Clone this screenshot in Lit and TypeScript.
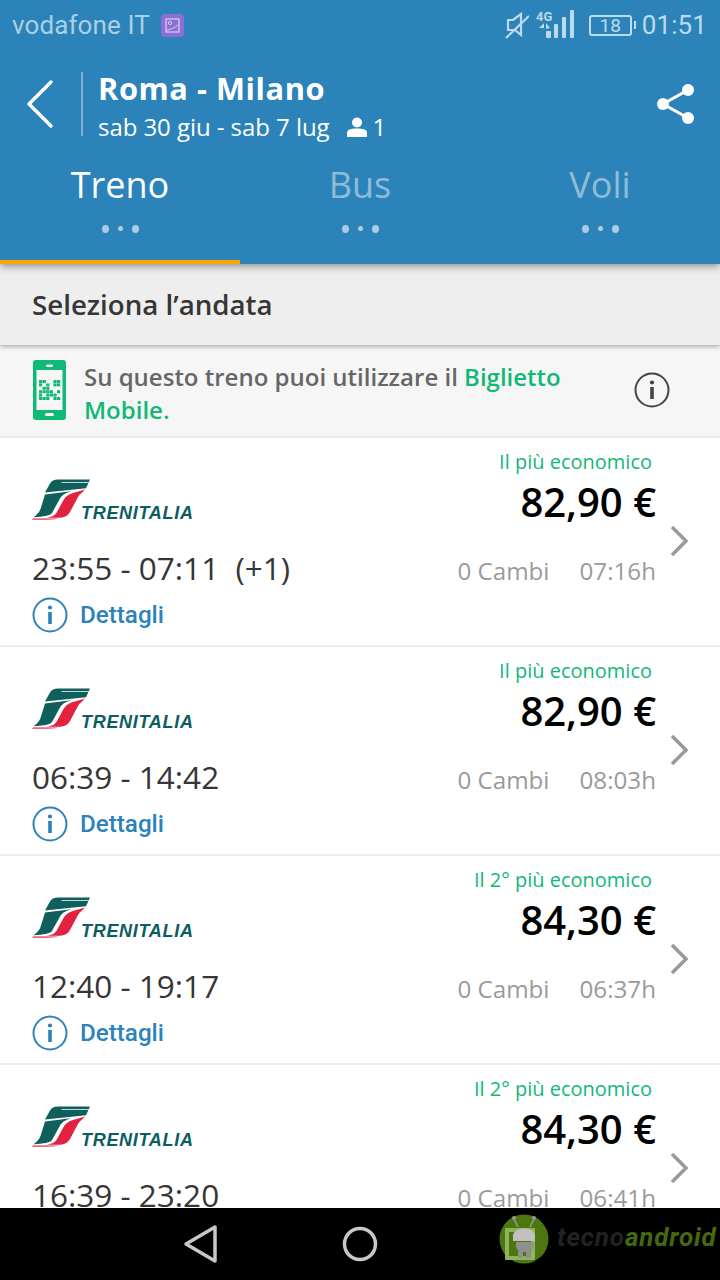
import { LitElement, html, css, svg } from "lit";
import { customElement } from "lit/decorators.js";

const logo = html`<svg class="logo-mark" width="60" height="42" viewBox="0 0 60 42">
  <path fill="#0f5f5c" d="M13 13.500 L18 4.500 C19.500 1.800 22 .5 26 .5 H58 L54 9.200 Z"/>
  <path fill="#fff" d="M30 3 H57 L56.500 3.800 H29 Z"/>
  <path fill="#0f5f5c" d="M13 15.500 L39 12.300 C34 14 30.500 15.500 28 19.500 L20 34 C18 36.500 12 37.800 1.500 38.200 C5 36 7 33.500 8.500 30 Z"/>
  <path fill="#e2233f" d="M53 10.500 C50 14 47.500 15 46 18 L38 33 C35.500 37.500 32 38.500 26 38.800 L14 38.800 C20 38 23 36.500 25 33 L31 22 C33 18 36 15.500 41 14 Z"/>
  <path fill="#ea6a80" d="M1 39.300 H26 C24 40.500 20 41 14 41 H0 Z"/>
</svg>`;

const infoIcon = () => html`<svg viewBox="0 0 36 36" width="36" height="36">
  <circle cx="18" cy="18" r="16.500" fill="none" stroke="currentColor" stroke-width="2"/>
  <circle cx="18" cy="10.500" r="2.100" fill="currentColor"/>
  <rect x="16.200" y="15" width="3.600" height="12" fill="currentColor"/>
</svg>`;

const rows = [
  { tag: "Il più economico", price: "82,90 €", time: "23:55 - 07:11", extra: "(+1)", dur: "07:16h", cambi: "0 Cambi" },
  { tag: "Il più economico", price: "82,90 €", time: "06:39 - 14:42", extra: "", dur: "08:03h", cambi: "0 Cambi" },
  { tag: "Il 2° più economico", price: "84,30 €", time: "12:40 - 19:17", extra: "", dur: "06:37h", cambi: "0 Cambi" },
  { tag: "Il 2° più economico", price: "84,30 €", time: "16:39 - 23:20", extra: "", dur: "06:41h", cambi: "0 Cambi" },
];

const qrCells = [
  [0,0],[1,0],[4,0],[5,0],[0,1],[2,1],[4,1],[5,1],[1,2],[2,2],[0,3],[1,3],[2,3],[3,3],[5,3],[0,4],[2,4],[3,4],[4,4],[0,5],[1,5],[2,5],[4,5],[5,5],
];

@customElement("app-root")
export class AppRoot extends LitElement {
  static styles = css`
    :host {
      display: flex;
      flex-direction: column;
      width: 720px;
      height: 1280px;
      overflow: hidden;
      background: #fff;
      font-family: "Open Sans", sans-serif;
      position: relative;
    }
    .top {
      background: #2b83b9;
      height: 264px;
      flex: none;
      display: flex;
      flex-direction: column;
      position: relative;
      z-index: 2;
      box-shadow: 0 3px 7px rgba(0,0,0,.35);
    }
    .status {
      height: 50px;
      flex: none;
      display: flex;
      align-items: center;
      padding: 0 13px 0 12px;
      color: #a9d0e5;
    }
    .carrier { font-family: "Roboto", sans-serif; font-size: 26px; letter-spacing: .1px; }
    .thumb { margin-left: 11px; }
    .spacer { flex: 1; }
    .status-icons { display: flex; align-items: center; }
    .signal { margin-left: 7px; }
    .batt {
      width: 43px; height: 21px; margin-left: 11px; box-sizing: border-box;
      border: 2px solid #bcdbec; border-radius: 3px;
      font: 19px/17px "Roboto", sans-serif; text-align: center; color: #bcdbec;
      position: relative;
    }
    .batt::after {
      content: ""; position: absolute; right: -6px; top: 4px; width: 2px; height: 8px; background: #bcdbec;
    }
    .clock { font: 26px "Roboto", sans-serif; margin-left: 10px; color: #bcdbec; letter-spacing: .1px; }
    .head {
      display: flex;
      align-items: center;
      height: 66px;
      flex: none;
      padding-left: 26px;
      padding-right: 24px;
      color: #fff;
      margin-top: 21px;
    }
    .divider { width: 2px; height: 64px; background: #80b4d4; margin-left: 27px; margin-right: 15px; }
    .titles { display: flex; flex-direction: column; margin-top: 3px; }
    .title { font-size: 30.800px; font-weight: 700; line-height: 36px; letter-spacing: .55px; }
    .sub { font-size: 24px; line-height: 30px; display: flex; align-items: center; letter-spacing: -.06px; margin-top: 6px; }
    .sub svg { margin-left: 17px; margin-right: 6px; }
    .tabs { display: flex; flex: 1; margin-top: 23px; }
    .tab {
      flex: 1;
      position: relative;
      display: flex; flex-direction: column; align-items: center;
      color: #8ebcd8;
      font-size: 36px;
      line-height: 46px;
      padding-top: 2px;
    }
    .tab.on { color: #fff; }
    .tab.on::after {
      content: ""; position: absolute; left: 0; right: 0; bottom: 0; height: 4px; background: #f6a800;
    }
    .dots { display: flex; align-items: center; gap: 9px; margin-top: 16.500px; }
    .dots i { display: block; width: 7px; height: 8px; border-radius: 50%; background: #a9cee3; }
    .dots i.s { width: 5px; height: 5px; }
    .section {
      height: 81px; flex: none; background: #eee;
      display: flex; align-items: center; padding: 0 0 2px 32px;
      font-size: 27.700px; font-weight: 600; color: #363636;
      box-shadow: 0 2px 4px rgba(0,0,0,.28);
      position: relative; z-index: 1;
      box-sizing: border-box;
    }
    .banner {
      height: 93px; flex: none; background: #f6f6f6;
      display: flex; align-items: center;
      padding-left: 33px; padding-right: 50px;
      border-bottom: 2px solid #ececec;
      box-sizing: border-box;
    }
    .phone { flex: none; margin-bottom: 2px; }
    .banner-text {
      flex: 1; margin-left: 18px;
      font-size: 24px; line-height: 33px; font-weight: 600; color: #666;
      padding-top: 5px;
    }
    .banner-text b { color: #10b975; font-weight: 600; }
    .banner-info { color: #444; flex: none; margin-top: 4px; }
    .list { flex: 1; overflow: hidden; min-height: 0; }
    .row {
      height: 209px;
      box-sizing: border-box;
      border-bottom: 2px solid #eee;
      display: grid;
      grid-template-columns: 1fr auto;
      padding: 0 64px 0 32px;
      position: relative;
      grid-template-rows: 40px 71px auto auto;
    }
    .tag {
      grid-column: 1 / 3; grid-row: 1;
      text-align: right; color: #10b975; font-size: 20px; line-height: 48px;
      padding-right: 4px;
    }
    .logo { grid-column: 1; grid-row: 1 / 3; align-self: start; margin-top: 41px; position: relative; height: 42px; width: 162px; }
    .logo-text {
      position: absolute; left: 49px; top: 25px;
      font: italic 700 18px/18px "Liberation Sans", sans-serif;
      color: #0b5d62; letter-spacing: .7px;
    }
    .price {
      grid-column: 2; grid-row: 2;
      text-align: right; font-size: 40px; font-weight: 600; color: #000; line-height: 50px;
      margin-top: -1px;
    }
    .time {
      grid-column: 1; grid-row: 3;
      font-size: 31.500px; color: #363636; line-height: 44px; white-space: pre; font-weight: 400;
      margin-top: -3px;
    }
    .meta {
      grid-column: 2; grid-row: 3;
      display: flex; gap: 30px; justify-content: flex-end;
      font-size: 24.200px; color: #9a9a9a; line-height: 44px;
    }
    .det {
      grid-column: 1 / 3; grid-row: 4;
      display: flex; align-items: center; gap: 12px;
      color: #2b83b9;
      font: 500 24.200px "Roboto", sans-serif;
      height: 36px;
      margin-top: -9px;
    }
    .chev { position: absolute; right: 32px; top: 87px; }
    .nav {
      height: 72px; flex: none; background: #000;
      display: flex; align-items: center; position: relative; z-index: 3;
    }
    .nav-back { margin-left: 183px; }
    .nav-home { margin-left: 123px; }
    .wm {
      position: absolute; left: 499px; top: 6px; display: flex; align-items: center;
    }
    .wm-text { font: italic 700 26px "Roboto", sans-serif; margin-left: 8px; letter-spacing: .85px; margin-top: -4px; }
    .wm-a { color: #222; }
    .wm-b { color: #46680f; }
  `;

  render() {
    return html`
      <div class="top">
        <div class="status">
          <span class="carrier">vodafone IT</span>
          <svg class="thumb" width="23" height="23" viewBox="0 0 23 23">
            <rect width="23" height="23" rx="4" fill="#8b6fd6"/>
            <rect x="5" y="5" width="13" height="13" fill="none" stroke="#d9d2f2" stroke-width="1.200"/>
            <circle cx="9" cy="9" r="1.600" fill="none" stroke="#d9d2f2" stroke-width="1"/>
            <path d="M5 16 C9 16 14 14 18 10" fill="none" stroke="#d9d2f2" stroke-width="1"/>
          </svg>
          <span class="spacer"></span>
          <div class="status-icons">
            <svg width="24" height="28" viewBox="0 0 24 28">
              <path d="M3 9 H8 L16 3 V24 L10 19 H3 Z" fill="none" stroke="#bcdbec" stroke-width="2.200"/>
              <path d="M1 27 L24 5" stroke="#bcdbec" stroke-width="2.200"/>
            </svg>
            <svg class="signal" width="42" height="30" viewBox="0 0 42 30">
              <text x="0" y="11" font-family="Roboto" font-weight="700" font-size="13" fill="#bcdbec">4G</text>
              <path d="M8 13 L3 18 H8 Z M10 13 V19 L14 18 Z" fill="#bcdbec"/>
              <rect x="10" y="21" width="5" height="7" rx="1" fill="#bcdbec"/>
              <rect x="18" y="14" width="4" height="14" rx="1" fill="#bcdbec"/>
              <rect x="26" y="7" width="4" height="21" rx="1" fill="#bcdbec"/>
              <rect x="34" y="0" width="4" height="28" rx="1" fill="#bcdbec"/>
            </svg>
            <div class="batt">18</div>
          </div>
          <span class="clock">01:51</span>
        </div>
        <div class="head">
          <svg width="28" height="50" viewBox="0 0 28 50">
            <path d="M25 3 L3 25 L25 47" fill="none" stroke="#fff" stroke-width="3.500" stroke-linecap="round" stroke-linejoin="round"/>
          </svg>
          <div class="divider"></div>
          <div class="titles">
            <div class="title">Roma - Milano</div>
            <div class="sub">sab 30 giu - sab 7 lug
              <svg width="20" height="20" viewBox="0 0 20 20"><circle cx="10" cy="5.500" r="5" fill="#fff"/><path d="M0 20 V16 C0 12.500 4 11.500 10 11.500 C16 11.500 20 12.500 20 16 V20 Z" fill="#fff"/></svg>
              1</div>
          </div>
          <span class="spacer"></span>
          <svg width="40" height="42" viewBox="0 0 40 42">
            <path d="M32 7 L7 21 L32 35" fill="none" stroke="#fff" stroke-width="3"/>
            <circle cx="32" cy="7" r="6" fill="#fff"/><circle cx="7" cy="21" r="6" fill="#fff"/><circle cx="32" cy="35" r="6" fill="#fff"/>
          </svg>
        </div>
        <div class="tabs">
          ${["Treno", "Bus", "Voli"].map((t, i) => html`
            <div class="tab ${i === 0 ? "on" : ""}">
              <span>${t}</span>
              <div class="dots"><i></i><i class="s"></i><i></i></div>
            </div>`)}
        </div>
      </div>
      <div class="section">Seleziona l’andata</div>
      <div class="banner">
        <svg class="phone" width="33" height="60" viewBox="0 0 33 60">
          <rect width="33" height="60" rx="3" fill="#10b975"/>
          <rect x="3.500" y="10" width="26" height="40" fill="#f6f6f6"/>
          <rect x="13" y="4.500" width="7" height="2.500" rx="1.200" fill="#f6f6f6"/>
          <rect x="12" y="53" width="9" height="3" rx="1.500" fill="#f6f6f6"/>
          ${qrCells.map(([x, y]) => svg`<rect x=${6 + x * 3.6} y=${20 + y * 3.4} width="3.200" height="3" fill="#10b975"/>`)}
        </svg>
        <div class="banner-text">Su questo treno puoi utilizzare il <b>Biglietto Mobile.</b></div>
        <span class="banner-info">${infoIcon()}</span>
      </div>
      <div class="list">
        ${rows.map((r) => html`
          <div class="row">
            <div class="logo">${logo}<span class="logo-text">TRENITALIA</span></div>
            <div class="tag">${r.tag}</div>
            <div class="price">${r.price}</div>
            <div class="time">${r.time}${r.extra ? html`  ${r.extra}` : ""}</div>
            <div class="meta"><span>${r.cambi}</span><span>${r.dur}</span></div>
            <div class="det">${infoIcon()}<span>Dettagli</span></div>
            <svg class="chev" width="18" height="32" viewBox="0 0 18 32"><path d="M2 2 L16 16 L2 30" fill="none" stroke="#999" stroke-width="3.500"/></svg>
          </div>`)}
      </div>
      <div class="nav">
        <svg class="nav-back" width="36" height="40" viewBox="0 0 36 40"><path d="M32 3 V37 L3 20 Z" fill="none" stroke="#c8c8c8" stroke-width="3.500" stroke-linejoin="round"/></svg>
        <svg class="nav-home" width="36" height="36" viewBox="0 0 36 36"><circle cx="18" cy="18" r="15.500" fill="none" stroke="#c8c8c8" stroke-width="3.500"/></svg>
        <div class="wm">
          <svg width="50" height="50" viewBox="0 0 50 50">
            <circle cx="25" cy="25" r="24.500" fill="#4d7611"/>
            <path d="M15 5 L19 13 M35 5 L31 13" stroke="#9a9a9a" stroke-width="1.500"/>
            <circle cx="15" cy="4" r="2" fill="#9a9a9a"/><circle cx="35" cy="4" r="2" fill="#9a9a9a"/>
            <rect x="6" y="14" width="30" height="32" rx="1" fill="#8fb35a"/>
            <rect x="10" y="18" width="22" height="24" fill="#4d7611"/>
            <path d="M14 22 C14 12 36 12 36 22 V27 H14 Z" fill="#c0c0c0"/>
            <path d="M17 28 H34 V33 L31 38 H20 L17 33 Z" fill="#8f8f8f"/>
            <rect x="19" y="38" width="5" height="6" fill="#8f8f8f"/><rect x="27" y="38" width="5" height="6" fill="#8f8f8f"/>
          </svg>
          <span class="wm-text"><span class="wm-a">tecno</span><span class="wm-b">android</span></span>
        </div>
      </div>
    `;
  }
}
